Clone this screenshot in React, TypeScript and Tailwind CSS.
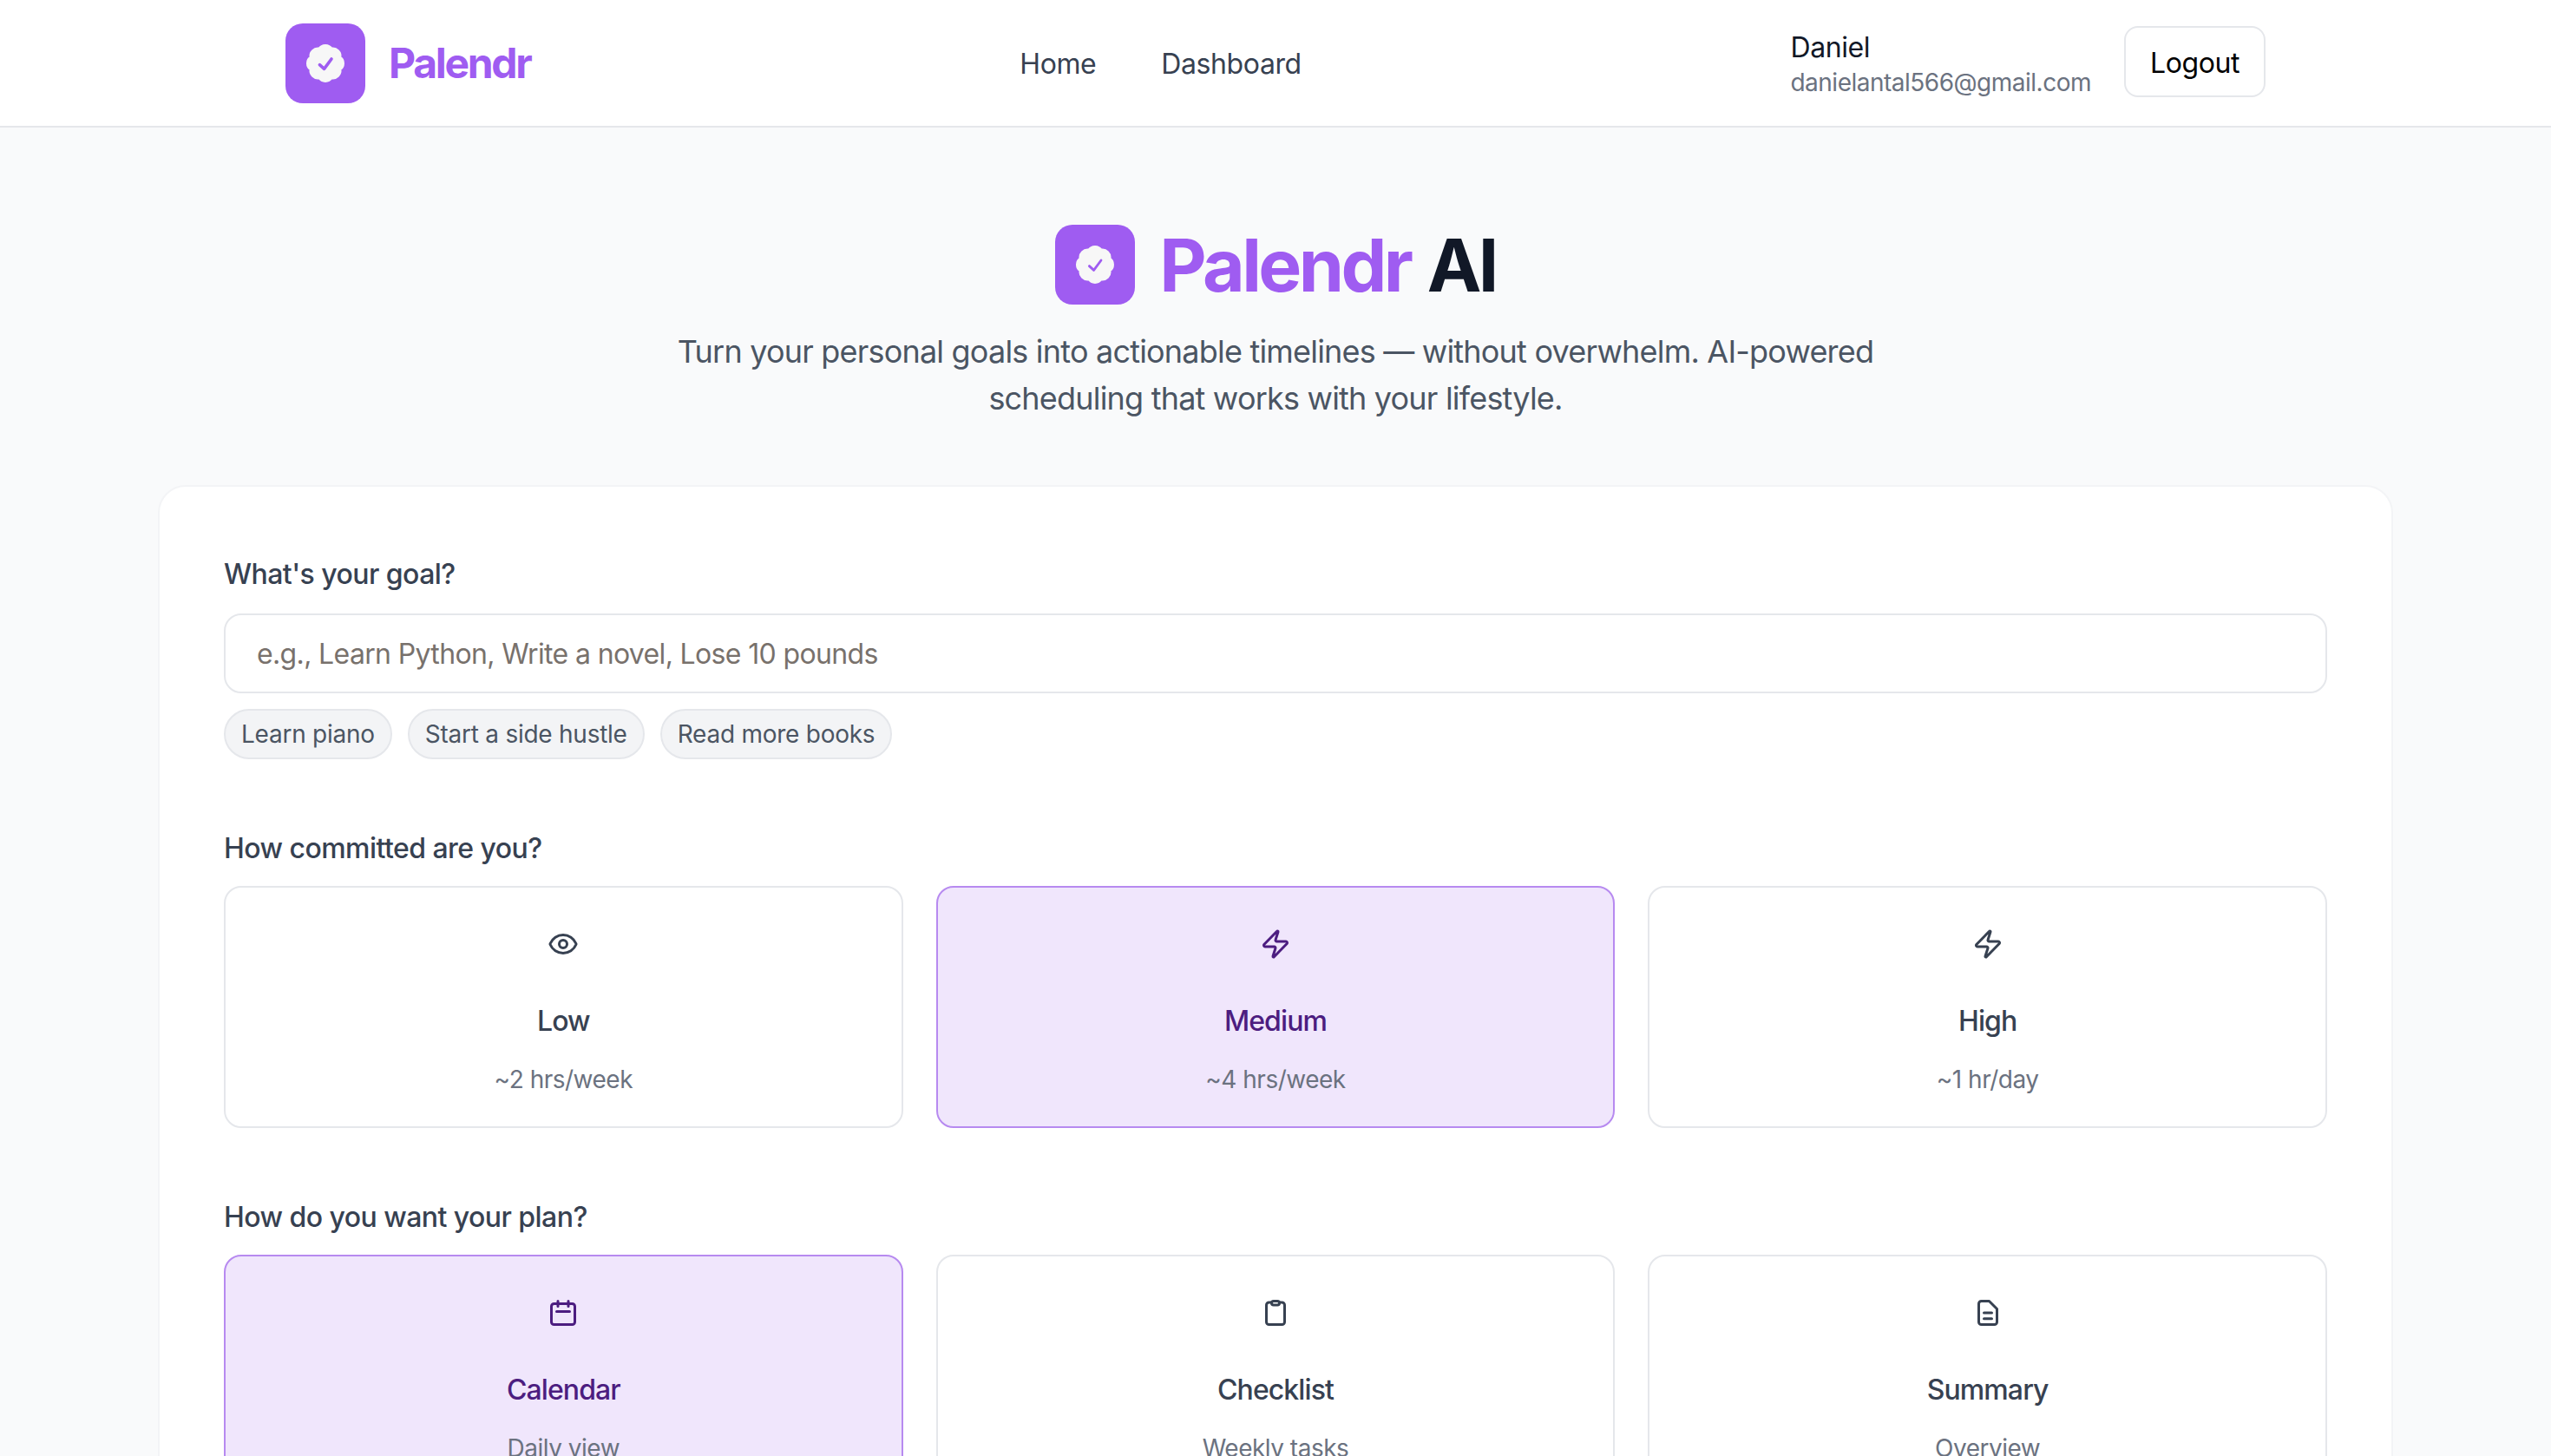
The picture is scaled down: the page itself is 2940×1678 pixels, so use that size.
import React from 'react';
import { Eye, Zap } from 'lucide-react';

const Badge = ({ size, tick }: { size: number; tick: number }) => (
  <svg width={size} height={size} viewBox="0 0 24 24" strokeLinecap="round" strokeLinejoin="round">
    <path
      d="M3.85 8.62a4 4 0 0 1 4.78-4.77 4 4 0 0 1 6.74 0 4 4 0 0 1 4.78 4.78 4 4 0 0 1 0 6.74 4 4 0 0 1-4.77 4.78 4 4 0 0 1-6.75 0 4 4 0 0 1-4.78-4.77 4 4 0 0 1 0-6.76Z"
      fill="#f7f7f7"
      stroke="#f7f7f7"
      strokeWidth="2"
    />
    <path d="M8.7 12.8 11.3 15.2 15.5 9.5" fill="none" stroke="#9f5cf1" strokeWidth={tick} />
  </svg>
);

const CalendarIcon = () => (
  <svg width="36" height="36" viewBox="0 0 24 24" fill="none" stroke="currentColor" strokeWidth="2" strokeLinecap="round" strokeLinejoin="round">
    <rect x="3" y="5" width="18" height="16" rx="2" />
    <path d="M8 3v4M16 3v4M7 11h10" />
  </svg>
);

const ClipboardIcon = () => (
  <svg width="36" height="36" viewBox="0 0 24 24" fill="none" stroke="currentColor" strokeWidth="2" strokeLinecap="round" strokeLinejoin="round">
    <rect x="5" y="4" width="14" height="17" rx="2" />
    <rect x="9" y="3" width="6" height="3" rx="1.5" fill="#fff" />
  </svg>
);

const FileIcon = () => (
  <svg width="36" height="36" viewBox="0 0 24 24" fill="none" stroke="currentColor" strokeWidth="2" strokeLinecap="round" strokeLinejoin="round">
    <path d="M7 3h6l6 6v10a2 2 0 0 1-2 2H7a2 2 0 0 1-2-2V5a2 2 0 0 1 2-2z" />
    <path d="M9 12h6M9 16.5h6" />
  </svg>
);

const OptionCard = ({ icon, title, sub, active }: { icon: React.ReactNode; title: string; sub: string; active?: boolean }) => (
  <div
    className={`h-[279px] rounded-[20px] border-2 flex flex-col items-center pt-[47px] ${active ? 'bg-[#f0e6fc] border-[#b78af0] text-[#4c1d80]' : 'bg-white border-[#e5e7eb] text-[#374151]'}`}
  >
    <div className="h-[36px] flex items-center">{icon}</div>
    <div className="mt-[47px] text-[32px] leading-[48px] font-medium tracking-[-0.9px]">{title}</div>
    <div className="mt-[23px] text-[28px] leading-[40px] tracking-[-0.5px] text-[#6b7280]">{sub}</div>
  </div>
);

export default function App() {
  const chips = ['Learn piano', 'Start a side hustle', 'Read more books'];

  return (
    <div className="h-[1678px] overflow-hidden bg-[#f9fafb] font-['Inter',sans-serif]">
      <header className="h-[147px] bg-white border-b-2 border-[#e5e7eb]">
        <div className="w-[2282px] mx-auto h-full flex items-center justify-between">
          <div className="flex items-center gap-[27px]">
            <div className="w-[92px] h-[92px] rounded-[20px] bg-[#9f5cf1] flex items-center justify-center">
              <Badge size={48} tick={1.8} />
            </div>
            <span className="text-[48px] font-bold tracking-[-2.3px] text-[#9f5cf1]">Palendr</span>
          </div>
          <nav className="flex items-center gap-[75px] pt-[2px] text-[32px] tracking-[-0.4px] text-[#374151]">
            <a>Home</a>
            <a>Dashboard</a>
          </nav>
          <div className="flex items-center gap-[38px]">
            <div className="flex flex-col pt-[5px]">
              <span className="text-[32px] leading-[40px] tracking-[-0.4px] text-[#111827]">Daniel</span>
              <span className="text-[28px] leading-[40px] tracking-[-0.5px] text-[#6b7280]">danielantal566@gmail.com</span>
            </div>
            <button className="w-[163px] h-[82px] mb-[3px] pt-[3px] rounded-[16px] border-2 border-[#e5e7eb] bg-white text-[32px] tracking-[-0.4px] text-black">Logout</button>
          </div>
        </div>
      </header>

      <main className="pt-[111px]">
        <div className="flex items-center justify-center gap-[28px]">
          <div className="w-[92px] h-[92px] rounded-[20px] bg-[#9f5cf1] flex items-center justify-center">
            <Badge size={48} tick={1.4} />
          </div>
          <h1 className="pt-[2px] text-[84px] leading-[92px] font-bold tracking-[-3.6px] [word-spacing:3px] text-[#111827]">
            <span className="text-[#9f5cf1]">Palendr</span> AI
          </h1>
        </div>
        <p className="mt-[26px] mx-auto w-[1440px] text-center text-[36px] leading-[54px] tracking-[-0.8px] text-[#4b5563]">
          Turn your personal goals into actionable timelines — without overwhelm. AI-powered scheduling that works with your lifestyle.
        </p>

        <section className="mt-[73px] mx-[182px] bg-white rounded-[32px] border-2 border-[#f3f4f6] px-[74px] pt-[77px] pb-[80px]">
          <label className="block text-[32px] leading-[48px] font-medium tracking-[-0.55px] text-[#374151]">What's your goal?</label>
          <input
            className="mt-[21px] w-full h-[92px] rounded-[20px] border-2 border-[#e5e7eb] bg-white px-[36px] text-[32px] tracking-[-0.64px] placeholder:text-[#78716c] outline-none"
            placeholder="e.g., Learn Python, Write a novel, Lose 10 pounds"
          />
          <div className="mt-[18px] flex gap-[18px]">
            {chips.map(chip => (
              <span key={chip} className="h-[58px] px-[18px] flex items-center rounded-full border-2 border-[#e5e7eb] bg-[#f3f4f6] text-[28px] tracking-[-0.25px] text-[#4b5563]">
                {chip}
              </span>
            ))}
          </div>

          <h2 className="mt-[79px] text-[32px] leading-[48px] font-medium tracking-[-0.55px] text-[#374151]">How committed are you?</h2>
          <div className="mt-[19px] grid grid-cols-3 gap-[38px]">
            <OptionCard icon={<Eye size={36} />} title="Low" sub="~2 hrs/week" />
            <OptionCard icon={<Zap size={36} />} title="Medium" sub="~4 hrs/week" active />
            <OptionCard icon={<Zap size={36} />} title="High" sub="~1 hr/day" />
          </div>

          <h2 className="mt-[79px] text-[32px] leading-[48px] font-medium tracking-[-0.55px] text-[#374151]">How do you want your plan?</h2>
          <div className="mt-[19px] grid grid-cols-3 gap-[38px]">
            <OptionCard icon={<CalendarIcon />} title="Calendar" sub="Daily view" active />
            <OptionCard icon={<ClipboardIcon />} title="Checklist" sub="Weekly tasks" />
            <OptionCard icon={<FileIcon />} title="Summary" sub="Overview" />
          </div>
        </section>
      </main>
    </div>
  );
}
